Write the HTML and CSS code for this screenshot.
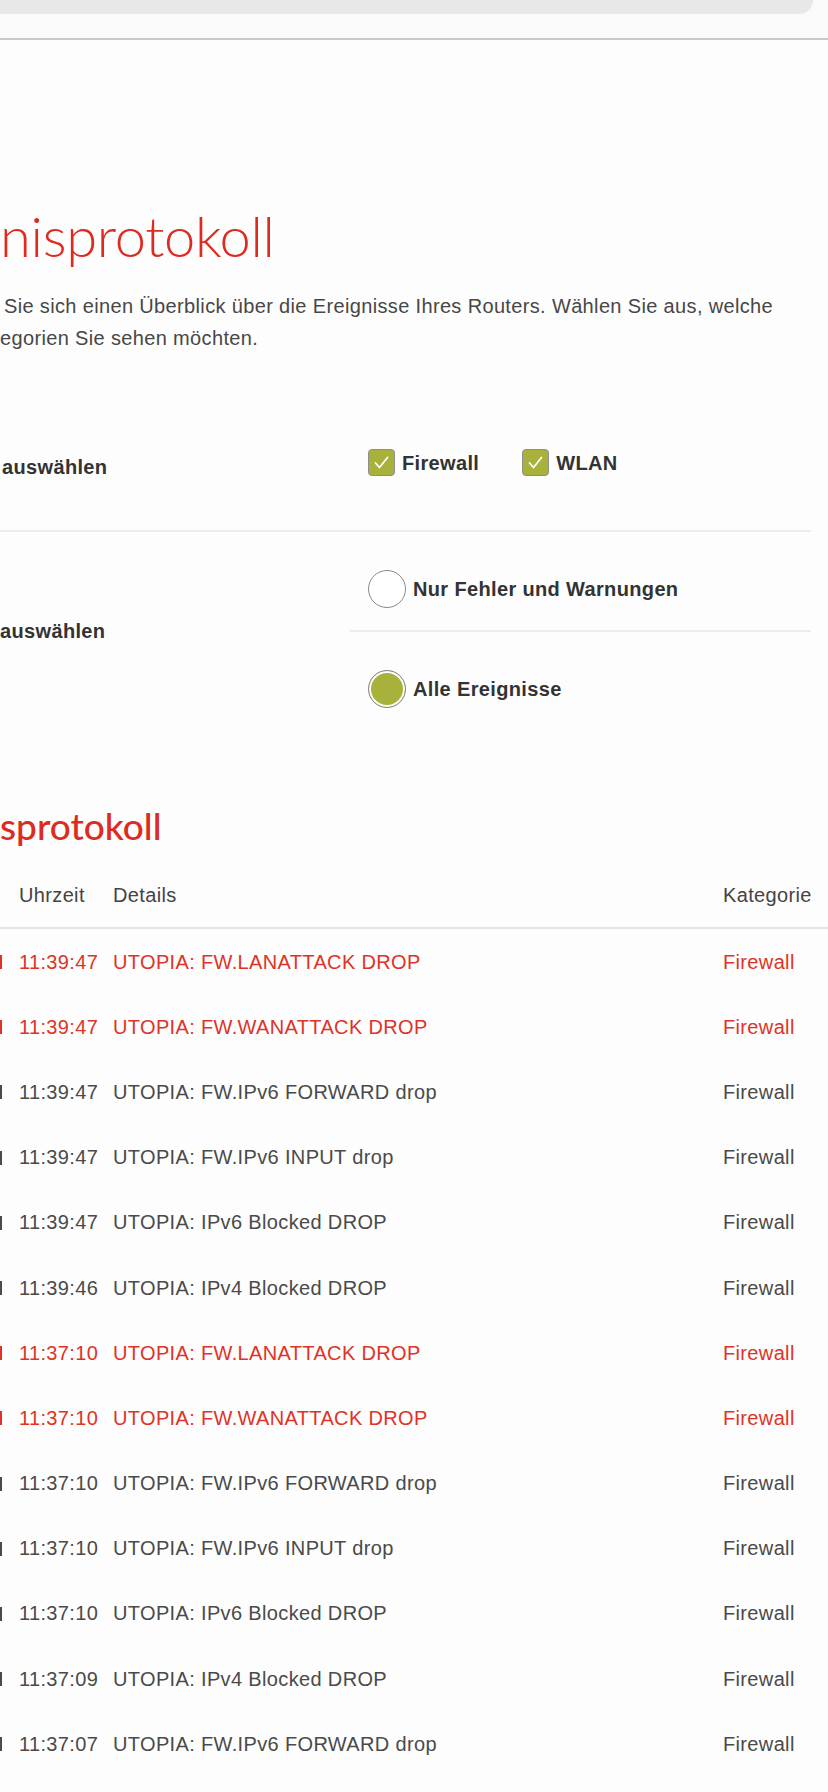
FILE: index.html
```html
<!DOCTYPE html>
<html lang="de">
<head>
<meta charset="utf-8">
<title>Ereignisprotokoll</title>
<link rel="stylesheet" href="styles.css">
</head>
<body>
<header class="browser-bar">
  <div class="browser-band"></div>
</header>
<main class="page">
  <h1 class="title">nisprotokoll</h1>
  <p class="intro">Sie sich einen Überblick über die Ereignisse Ihres Routers. Wählen Sie aus, welche<br>egorien Sie sehen möchten.</p>

  <section class="filters">
    <div class="filter-row filter-row--cats">
      <div class="filter-label filter-label--cats">auswählen</div>
      <div class="filter-control filter-control--cats">
        <label class="check"><span class="check-box"><svg viewBox="0 0 27 27" width="27" height="27"><polyline points="7.5,14 11.5,18.5 19.5,8.5" fill="none" stroke="#fff" stroke-width="1.8" stroke-linecap="round" stroke-linejoin="round"/></svg></span><span class="check-text">Firewall</span></label>
        <label class="check"><span class="check-box"><svg viewBox="0 0 27 27" width="27" height="27"><polyline points="7.5,14 11.5,18.5 19.5,8.5" fill="none" stroke="#fff" stroke-width="1.8" stroke-linecap="round" stroke-linejoin="round"/></svg></span><span class="check-text">WLAN</span></label>
      </div>
    </div>
    <div class="filter-row filter-row--level">
      <div class="filter-label filter-label--level">auswählen</div>
      <div class="filter-control filter-control--level">
        <label class="radio-opt radio-opt--first"><span class="radio"></span><span class="radio-text">Nur Fehler und Warnungen</span></label>
        <label class="radio-opt"><span class="radio radio--on"></span><span class="radio-text">Alle Ereignisse</span></label>
      </div>
    </div>
  </section>

  <h2 class="subtitle">sprotokoll</h2>

  <div class="log">
    <div class="log-row log-head">
      <div class="c-date"></div>
      <div class="c-time">Uhrzeit</div>
      <div class="c-det">Details</div>
      <div class="c-cat">Kategorie</div>
    </div>
    <div class="log-row is-alert"><div class="c-date"><span class="edge"></span></div><div class="c-time">11:39:47</div><div class="c-det">UTOPIA: FW.LANATTACK DROP</div><div class="c-cat">Firewall</div></div>
    <div class="log-row is-alert"><div class="c-date"><span class="edge"></span></div><div class="c-time">11:39:47</div><div class="c-det">UTOPIA: FW.WANATTACK DROP</div><div class="c-cat">Firewall</div></div>
    <div class="log-row"><div class="c-date"><span class="edge"></span></div><div class="c-time">11:39:47</div><div class="c-det">UTOPIA: FW.IPv6 FORWARD drop</div><div class="c-cat">Firewall</div></div>
    <div class="log-row"><div class="c-date"><span class="edge"></span></div><div class="c-time">11:39:47</div><div class="c-det">UTOPIA: FW.IPv6 INPUT drop</div><div class="c-cat">Firewall</div></div>
    <div class="log-row"><div class="c-date"><span class="edge"></span></div><div class="c-time">11:39:47</div><div class="c-det">UTOPIA: IPv6 Blocked DROP</div><div class="c-cat">Firewall</div></div>
    <div class="log-row"><div class="c-date"><span class="edge"></span></div><div class="c-time">11:39:46</div><div class="c-det">UTOPIA: IPv4 Blocked DROP</div><div class="c-cat">Firewall</div></div>
    <div class="log-row is-alert"><div class="c-date"><span class="edge"></span></div><div class="c-time">11:37:10</div><div class="c-det">UTOPIA: FW.LANATTACK DROP</div><div class="c-cat">Firewall</div></div>
    <div class="log-row is-alert"><div class="c-date"><span class="edge"></span></div><div class="c-time">11:37:10</div><div class="c-det">UTOPIA: FW.WANATTACK DROP</div><div class="c-cat">Firewall</div></div>
    <div class="log-row"><div class="c-date"><span class="edge"></span></div><div class="c-time">11:37:10</div><div class="c-det">UTOPIA: FW.IPv6 FORWARD drop</div><div class="c-cat">Firewall</div></div>
    <div class="log-row"><div class="c-date"><span class="edge"></span></div><div class="c-time">11:37:10</div><div class="c-det">UTOPIA: FW.IPv6 INPUT drop</div><div class="c-cat">Firewall</div></div>
    <div class="log-row"><div class="c-date"><span class="edge"></span></div><div class="c-time">11:37:10</div><div class="c-det">UTOPIA: IPv6 Blocked DROP</div><div class="c-cat">Firewall</div></div>
    <div class="log-row"><div class="c-date"><span class="edge"></span></div><div class="c-time">11:37:09</div><div class="c-det">UTOPIA: IPv4 Blocked DROP</div><div class="c-cat">Firewall</div></div>
    <div class="log-row"><div class="c-date"><span class="edge"></span></div><div class="c-time">11:37:07</div><div class="c-det">UTOPIA: FW.IPv6 FORWARD drop</div><div class="c-cat">Firewall</div></div>
  </div>
</main>
</body>
</html>
```
FILE: styles.css
```css
html, body {
  margin: 0;
  padding: 0;
  background: #fdfdfd;
}
body {
  font-family: "Liberation Sans", Arial, sans-serif;
  color: #444;
  letter-spacing: 0.35px;
  overflow: hidden;
}

.browser-bar {
  height: 38px;
  background: #fafafa;
  border-bottom: 2px solid #c8c8c8;
}
.browser-band {
  width: 813px;
  height: 14px;
  background: #e8e8e8;
  border-bottom-right-radius: 16px;
}

.page {
  padding: 0 17px 0 0;
}

.title {
  margin: 164px 0 0 0;
  font-family: Lato, "Noto Sans", sans-serif;
  font-weight: 300;
  font-size: 56px;
  line-height: 64px;
  letter-spacing: -0.3px;
  color: #de2b20;
}

.intro {
  margin: 22px 0 0 0;
  font-size: 20px;
  line-height: 32px;
  text-indent: 4px;
  color: #474747;
}

.filters {
  margin-top: 50px;
}
.filter-row {
  display: grid;
  grid-template-columns: 350px 1fr;
}
.filter-row--cats {
  border-bottom: 2px solid #ececec;
}
.filter-label {
  font-weight: 700;
  font-size: 20px;
  line-height: 24px;
  color: #333;
}
.filter-label--cats {
  padding: 51px 0 0 2px;
}
.filter-label--level {
  align-self: center;
}
.filter-control--cats {
  display: flex;
  gap: 43px;
  padding: 45px 0 54px 18px;
}
.check {
  display: flex;
  align-items: center;
  gap: 7px;
  height: 27px;
}
.check-box {
  width: 27px;
  height: 27px;
  box-sizing: border-box;
  border: 1px solid #8e8e8e;
  border-radius: 4px;
  background: #a8b23b;
  display: flex;
  align-items: center;
  justify-content: center;
  overflow: hidden;
}
.check-box svg {
  display: block;
  flex: none;
}
.check-text, .radio-text {
  font-weight: 700;
  font-size: 20px;
  line-height: 24px;
  color: #333;
}

.radio-opt {
  display: flex;
  align-items: center;
  gap: 7px;
  padding: 38px 0 22px 18px;
}
.radio-opt--first {
  border-bottom: 2px solid #ececec;
}
.radio {
  width: 38px;
  height: 38px;
  box-sizing: border-box;
  border: 1.5px solid #8a8a8a;
  border-radius: 50%;
  background: #fff;
  flex: none;
}
.radio--on {
  background: #a8b23b;
  box-shadow: inset 0 0 0 2px #fff;
}

.subtitle {
  margin: 74px 0 0 0;
  font-family: Lato, "Noto Sans", sans-serif;
  font-weight: 500;
  font-size: 37px;
  line-height: 44px;
  letter-spacing: 0;
  color: #de2b20;
}

.log {
  margin-top: 14px;
  margin-right: -17px;
}
.log-row {
  display: grid;
  grid-template-columns: 5px 78px 1fr 88px;
  column-gap: 14px;
  align-items: center;
  height: 65.2px;
  padding-right: 17px;
  font-size: 20px;
  line-height: 24px;
  color: #4a4a4a;
}
.log-row .c-det {
  margin-left: 2px;
}
.log-head {
  height: 65px;
  border-bottom: 2px solid #e4e4e4;
  color: #444;
}
.log-row.is-alert {
  color: #e03226;
}
.c-date {
  display: flex;
  align-items: center;
  height: 24px;
}
.edge {
  display: block;
  width: 2px;
  height: 14px;
  margin-top: 1px;
  background: currentColor;
}
.c-det {
  white-space: nowrap;
}
```
